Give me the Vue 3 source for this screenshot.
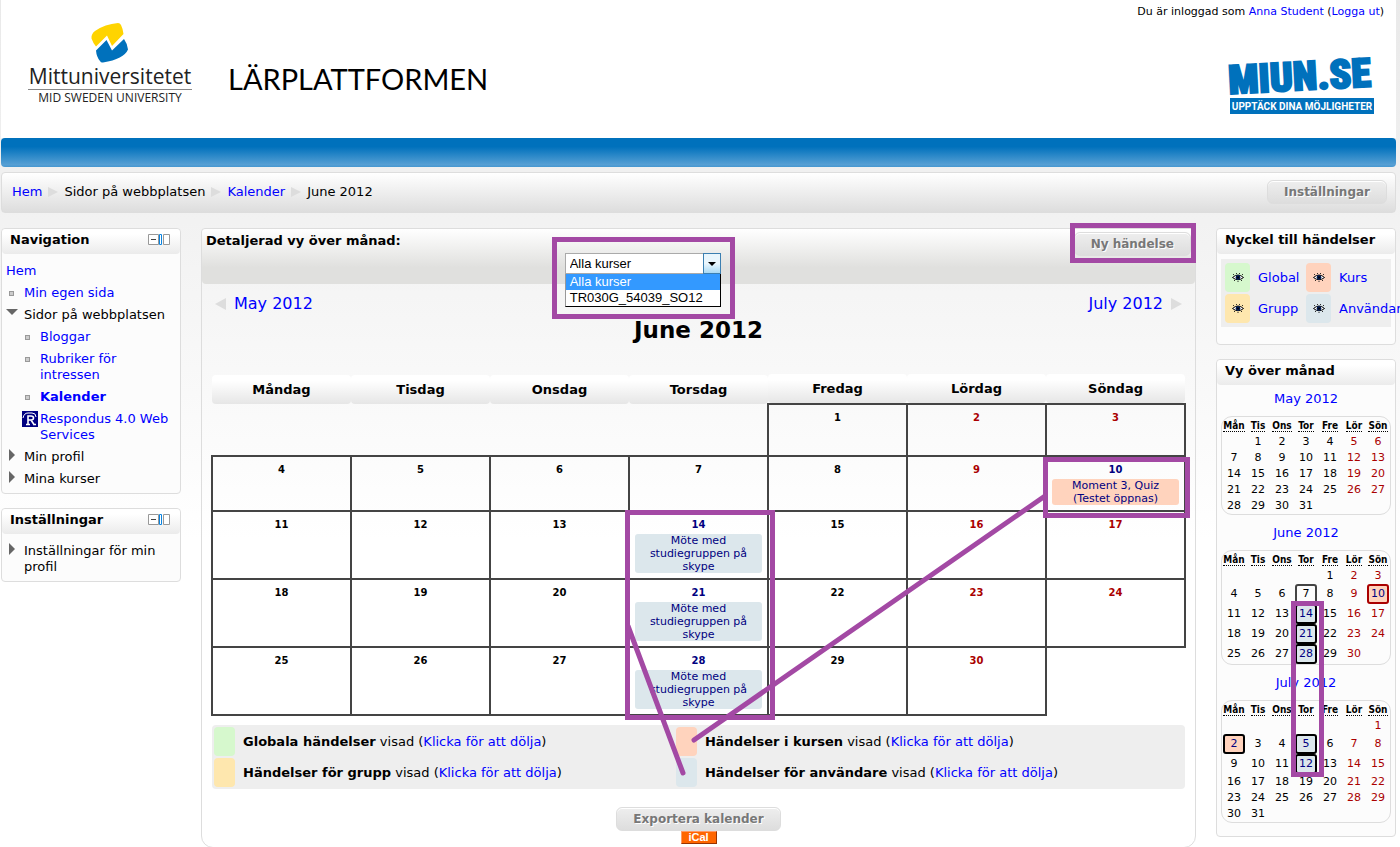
<script setup>
import { ref } from 'vue'

const course = ref('Alla kurser')
const courses = ['Alla kurser', 'TR030G_54039_SO12']
const weekdays = ['Måndag', 'Tisdag', 'Onsdag', 'Torsdag', 'Fredag', 'Lördag', 'Söndag']
const shortDays = ['Mån', 'Tis', 'Ons', 'Tor', 'Fre', 'Lör', 'Sön']

function buildWeeks(offset, total) {
  const cells = []
  for (let i = 0; i < offset; i++) cells.push(null)
  for (let d = 1; d <= total; d++) cells.push(d)
  while (cells.length % 7) cells.push(null)
  const weeks = []
  for (let i = 0; i < cells.length; i += 7) weeks.push(cells.slice(i, i + 7))
  return weeks
}

const juneWeeks = buildWeeks(4, 30)
const meeting = { kind: 'user', text: 'Möte med studiegruppen på skype' }
const events = {
  10: { kind: 'course', text: 'Moment 3, Quiz (Testet öppnas)' },
  14: meeting,
  21: meeting,
  28: meeting
}

const minis = [
  { title: 'May 2012', weeks: buildWeeks(1, 31), marks: {} },
  {
    title: 'June 2012',
    weeks: juneWeeks,
    marks: { 7: 'today', 10: 'course weekend-mark', 14: 'user', 21: 'user', 28: 'user' }
  },
  { title: 'July 2012', weeks: buildWeeks(6, 31), marks: { 2: 'course', 5: 'user', 12: 'user' } }
]

const legend = [
  { kind: 'global', label: 'Globala händelser' },
  { kind: 'course', label: 'Händelser i kursen' },
  { kind: 'group', label: 'Händelser för grupp' },
  { kind: 'user', label: 'Händelser för användare' }
]
const keys = [
  { kind: 'global', label: 'Global' },
  { kind: 'course', label: 'Kurs' },
  { kind: 'group', label: 'Grupp' },
  { kind: 'user', label: 'Användare' }
]
</script>

<template>
  <div class="page">
    <header class="top">
      <div class="brand">
        <svg class="emblem" viewBox="0 0 38 40" aria-hidden="true">
          <path d="M5 23.500Q2 20 .5 15.500Q0 11 4 8Q14 1 27 0Q29 0 30 2Q32 6 32.500 11L21 23L16 12.500Z" fill="#ffd400" />
          <path d="M5 27.500L15.500 17L21 27.500L33 16Q36 20 37 26.500Q33 36 12 39.500Q10 40 9 38Q5.500 34 5 27.500Z" fill="#0071bc" />
        </svg>
        <div class="uni">Mittuniversitetet</div>
        <div class="uni-sub">MID SWEDEN UNIVERSITY</div>
      </div>
      <div class="site-name">LÄRPLATTFORMEN</div>
      <div class="top-right">
        <div class="login">Du är inloggad som <a href="#">Anna Student</a> (<a href="#">Logga ut</a>)</div>
        <svg class="miun" viewBox="0 0 148 64" role="img" aria-label="MIUN.SE">
          <text class="miun-name" x="2" y="42" transform="rotate(-3 2 42)">MIUN.SE</text>
          <rect x="3" y="46" width="144" height="16" fill="#0071bc" />
          <text class="miun-tag" x="75" y="58" text-anchor="middle">UPPTÄCK DINA MÖJLIGHETER</text>
        </svg>
      </div>
    </header>

    <div class="blue-bar"></div>

    <nav class="crumbs">
      <a href="#">Hem</a><i class="tri"></i>
      <span>Sidor på webbplatsen</span><i class="tri"></i>
      <a href="#">Kalender</a><i class="tri"></i>
      <span>June 2012</span>
      <button class="btn settings" type="button">Inställningar</button>
    </nav>

    <div class="columns">
      <aside class="side">
        <section class="block">
          <h2 class="block-head">Navigation
            <svg class="tools" viewBox="0 0 22 12" aria-hidden="true">
              <path d="M.5 .5H10.500V10.500H.5ZM15.500 .5H21.500V10.500H15.500Z" fill="#fff" stroke="#999" />
              <path d="M3 5.500H8" stroke="#444" />
              <path d="M11.500 .5H13.500V10.500H11.500Z" fill="#fff" stroke="#0a84e0" />
            </svg>
          </h2>
          <ul class="tree">
            <li class="l0"><a href="#">Hem</a></li>
            <li class="l1 dot"><a href="#">Min egen sida</a></li>
            <li class="l1 open">Sidor på webbplatsen</li>
            <li class="l2 dot"><a href="#">Bloggar</a></li>
            <li class="l2 dot"><a href="#">Rubriker för intressen</a></li>
            <li class="l2 dot"><a href="#"><b>Kalender</b></a></li>
            <li class="l2">
              <svg class="resp" viewBox="0 0 16 16" aria-hidden="true">
                <rect width="16" height="16" fill="#000080" />
                <path d="M1 7Q2 2 6 2H10Q14 2 14 6" fill="none" stroke="#fff" />
                <path d="M6 14V5H9Q11.500 5 11.500 7Q11.500 9 9 9H6M9 9L12 13.500M4 13.500H8M11 13.500H14" fill="none" stroke="#fff" stroke-width="1.6" />
              </svg>
              <a href="#">Respondus 4.0 Web Services</a>
            </li>
            <li class="l1 shut">Min profil</li>
            <li class="l1 shut">Mina kurser</li>
          </ul>
        </section>
        <section class="block">
          <h2 class="block-head">Inställningar
            <svg class="tools" viewBox="0 0 22 12" aria-hidden="true">
              <path d="M.5 .5H10.500V10.500H.5ZM15.500 .5H21.500V10.500H15.500Z" fill="#fff" stroke="#999" />
              <path d="M3 5.500H8" stroke="#444" />
              <path d="M11.500 .5H13.500V10.500H11.500Z" fill="#fff" stroke="#0a84e0" />
            </svg>
          </h2>
          <ul class="tree">
            <li class="l1 shut">Inställningar för min profil</li>
          </ul>
        </section>
      </aside>

      <main class="main">
        <div class="main-head">
          <label class="main-title" for="course">Detaljerad vy över månad:</label>
          <div class="picker">
            <select id="course" v-model="course">
              <option v-for="c in courses" :key="c">{{ c }}</option>
            </select>
            <span class="drop"><i></i></span>
            <ul class="options">
              <li v-for="c in courses" :key="c" :class="{ chosen: c === course }">{{ c }}</li>
            </ul>
          </div>
          <button class="btn new-event" type="button">Ny händelse</button>
        </div>

        <div class="month-nav">
          <span><i class="tri left"></i><a href="#">May 2012</a></span>
          <span><a href="#">July 2012</a><i class="tri"></i></span>
        </div>
        <h1>June 2012</h1>

        <table class="month">
          <thead>
            <tr>
              <th v-for="d in weekdays" :key="d"><span>{{ d }}</span></th>
            </tr>
          </thead>
          <tbody>
            <tr v-for="(week, w) in juneWeeks" :key="w">
              <td v-for="(day, i) in week" :key="i" :class="{ blank: !day, weekend: i > 4 }">
                <template v-if="day">
                  <a v-if="events[day]" class="num linked" href="#">{{ day }}</a>
                  <span v-else class="num">{{ day }}</span>
                  <a v-if="events[day]" href="#" class="event" :class="events[day].kind">{{ events[day].text }}</a>
                </template>
              </td>
            </tr>
          </tbody>
        </table>

        <div class="legend">
          <template v-for="l in legend" :key="l.kind">
            <i class="swatch" :class="l.kind"></i>
            <span><b>{{ l.label }}</b> visad (<a href="#">Klicka för att dölja</a>)</span>
          </template>
        </div>

        <div class="export">
          <button class="btn" type="button">Exportera kalender</button>
          <a class="ical" href="#">iCal</a>
        </div>
      </main>

      <aside class="side">
        <section class="block key-block">
          <h2 class="block-head">Nyckel till händelser</h2>
          <div class="keys">
            <template v-for="k in keys" :key="k.kind">
              <i class="swatch" :class="k.kind">
                <svg viewBox="0 0 12 9" aria-hidden="true">
                  <path d="M.5 4.500Q6 -.5 11.500 4.500Q6 9 .5 4.500Z" fill="#fff" stroke="#000" />
                  <circle cx="6" cy="4.500" r="2.400" fill="#001a50" />
                  <circle cx="6" cy="4.500" r="1" fill="#000" />
                  <path d="M2 2L1 1M4.500 1V0M7.500 1V0M10 2L11 1M3 7L2 8M9 7L10 8M6 8V9" stroke="#000" stroke-width=".8" />
                </svg>
              </i>
              <a href="#">{{ k.label }}</a>
            </template>
          </div>
        </section>

        <section class="block mini-block">
          <h2 class="block-head">Vy över månad</h2>
          <div v-for="m in minis" :key="m.title" class="mini">
            <a class="mini-title" href="#">{{ m.title }}</a>
            <div class="mini-box">
              <table>
                <thead>
                  <tr>
                    <th v-for="d in shortDays" :key="d"><abbr>{{ d }}</abbr></th>
                  </tr>
                </thead>
                <tbody>
                  <tr v-for="(week, w) in m.weeks" :key="w">
                    <td v-for="(day, i) in week" :key="i" :class="{ weekend: i > 4 }">
                      <a v-if="m.marks[day]" href="#" class="mark" :class="m.marks[day]">{{ day }}</a>
                      <template v-else>{{ day }}</template>
                    </td>
                  </tr>
                </tbody>
              </table>
            </div>
          </div>
        </section>
      </aside>
    </div>

    <svg class="notes" width="1400" height="847" aria-hidden="true">
      <g fill="none" stroke="#a349a4" stroke-width="5">
        <path d="M554.500 239.500H732.500V316.500H554.500Z" />
        <path d="M1072.500 225.500H1193.500V260.500H1072.500Z" />
        <path d="M1045.500 459.500H1187.500V515.500H1045.500Z" />
        <path d="M627.500 512.500H772.500V717.500H627.500Z" />
        <path d="M1293.500 603.500H1321.500V774.500H1293.500Z" />
        <path d="M694 740L1045 496M628 626L683 773" stroke-linecap="round" />
      </g>
    </svg>
  </div>
</template>

<style>
body {
  margin: 0;
  background: #fff;
}
</style>

<style scoped>
.page {
  position: relative;
  min-height: 100vh;
  max-height: 100vh;
  overflow: hidden;
  box-sizing: border-box;
  padding: 0 4px 0 1px;
  background: linear-gradient(#e9e9e9, #fff 540px);
  font: 13px/16px "DejaVu Sans", Verdana, sans-serif;
  color: #000;
}
a { color: #00f; text-decoration: none; }
ul { list-style: none; margin: 0; padding: 0; }

.top {
  display: flex;
  height: 138px;
  background: #fff;
}
.brand {
  width: 164px;
  margin-left: 27px;
  padding-top: 23px;
  text-align: center;
  color: #222;
}
.emblem { display: block; width: 38px; height: 40px; margin: 0 auto; }
.uni {
  font: 21px/26px "Open Sans", sans-serif;
  border-bottom: 1px solid #888;
}
.uni-sub { font: 12px/16px "Open Sans", sans-serif; white-space: nowrap; }
.site-name {
  margin: 59px 0 0 36px;
  font: 29px/40px Lato, sans-serif;
}
.top-right {
  margin-left: auto;
  padding: 5px 12px 0 0;
  display: flex;
  flex-direction: column;
  align-items: flex-end;
}
.login { font-size: 11px; line-height: 14px; }
.miun { width: 148px; height: 64px; margin: 33px 9px 0 0; overflow: visible; }
.miun-name {
  font: 900 40px "Roboto Condensed", "Open Sans Condensed", Roboto, sans-serif;
  fill: #0071bc;
  stroke: #0071bc;
  stroke-width: 2px;
}
.miun-tag {
  font: bold 10px Roboto, sans-serif;
  fill: #fff;
}

.blue-bar {
  height: 29px;
  border-radius: 4px;
  background: linear-gradient(#0071bc 30%, #569fd4 92%, #4597d0);
}
.crumbs {
  display: flex;
  align-items: center;
  height: 37px;
  margin-top: 5px;
  padding: 0 8px 2px 10px;
  border: 1px solid #ddd;
  border-radius: 4px;
  background: linear-gradient(#fff, #ddd);
}
.tri {
  width: 0;
  height: 0;
  margin: 0 6px;
  border: solid transparent;
  border-width: 5px 0 5px 10px;
  border-left-color: #ddd;
}
.btn {
  box-sizing: border-box;
  height: 24px;
  padding: 0 16px;
  border: 1px solid #ddd;
  border-radius: 6px;
  background: linear-gradient(#eee, #ddd);
  box-shadow: inset 0 1px 0 #fff;
  font: bold 12px/20px "DejaVu Sans", Verdana, sans-serif;
  color: #777;
  text-shadow: 1px 1px 0 #fff;
}
.settings { margin-left: auto; }

.columns {
  display: grid;
  grid-template-columns: 180px minmax(0, 1fr) 180px;
  gap: 20px;
  align-items: start;
  margin-top: 15px;
}
.block {
  border: 1px solid #ddd;
  border-radius: 4px;
  background: #fcfcfc;
  margin-bottom: 14px;
}
.block-head {
  display: flex;
  align-items: center;
  justify-content: space-between;
  height: 25px;
  margin: 0;
  padding: 0 10px 4px 8px;
  box-sizing: border-box;
  border-radius: 4px;
  background: linear-gradient(#fff 20%, #ebebeb);
  font-size: 13px;
  line-height: 16px;
}
.tools { width: 22px; height: 12px; }
.tree { padding: 6px 4px 3px; }
.tree li {
  position: relative;
  padding-top: 3px;
  padding-bottom: 3px;
}
.l1 { padding-left: 18px; }
.l2 { padding-left: 34px; }
.dot::before {
  content: "";
  position: absolute;
  left: 3px;
  top: 9px;
  width: 3px;
  height: 3px;
  border: 1px solid #999;
  background: #ccc;
}
.l2.dot::before { left: 19px; }
.open::before {
  content: "";
  position: absolute;
  left: 0;
  top: 5px;
  border: solid transparent;
  border-width: 6px 6px 0;
  border-top-color: #666;
}
.shut::before {
  content: "";
  position: absolute;
  left: 3px;
  top: 3px;
  border: solid transparent;
  border-width: 6px 0 6px 6px;
  border-left-color: #666;
}
.resp { position: absolute; left: 16px; top: 3px; width: 16px; height: 16px; }

.main {
  border: 1px solid #ddd;
  border-radius: 4px 4px 12px 12px;
  padding-bottom: 3px;
}
.main-head {
  position: relative;
  height: 55px;
  border-radius: 4px;
  background: linear-gradient(#fff, #e0e0de 70%);
  display: grid;
  grid-template-columns: 13fr 156px 17fr;
  align-items: start;
}
.main-title { padding: 4px 0 0 4px; font-weight: bold; }
.new-event { justify-self: end; margin: 3px 4px 0 0; }
.picker {
  position: relative;
  margin-top: 24px;
  font: 13px/16px "Liberation Sans", Arial, sans-serif;
}
.picker select {
  display: block;
  width: 100%;
  height: 21px;
  padding: 0 4px;
  border: 1px solid #aaa;
  border-radius: 0;
  appearance: none;
  background: #fff;
  font: inherit;
  color: #000;
}
.drop {
  position: absolute;
  right: 0;
  top: 0;
  width: 16px;
  height: 19px;
  border: 1px solid #3c7fb1;
  background: linear-gradient(#eaf6fd 50%, #a7d9f5);
  display: flex;
  align-items: center;
  justify-content: center;
}
.drop i { border: 4px solid transparent; border-top-color: #000; border-bottom: 0; }
.options {
  position: absolute;
  z-index: 1;
  left: 0;
  right: 0;
  top: 21px;
  border: 1px solid #000;
  border-left-color: #999;
  border-top: 0;
  background: #fff;
}
.options li { padding: 0 4px; white-space: nowrap; }
.options .chosen { background: #3399ff; color: #fff; }

.month-nav {
  display: flex;
  justify-content: space-between;
  margin: 10px 13px 0;
  font-size: 16px;
  line-height: 20px;
}
.month-nav span { display: flex; align-items: center; }
.month-nav .tri { margin: 0 0 0 8px; border-width: 6px 0 6px 11px; }
.month-nav .tri.left { margin: 0 8px 0 0; border-width: 6px 11px 6px 0; border-right-color: #ddd; }
h1 { margin: 0 0 28px; text-align: center; font-size: 23px; line-height: 32px; }

.month {
  width: calc(100% - 18px);
  margin: 0 9px;
  table-layout: fixed;
  border-collapse: collapse;
  text-align: center;
}
.month th { padding: 0; }
.month th span {
  display: block;
  line-height: 29px;
  border-radius: 4px;
  background: linear-gradient(#fff 20%, #e6e6e6);
}
.month td {
  height: 52px;
  padding: 5px;
  vertical-align: top;
  border: 2px solid #444;
  font-size: 11px;
  line-height: 13px;
  box-sizing: border-box;
}
.month td.blank { border: 0; }
.num { display: block; margin-bottom: 2px; font-weight: bold; font-size: 10px; line-height: 15px; }
.weekend { color: #a00; }
.linked { color: #000080; }
.event { display: block; padding: 0 12px; border-radius: 3px; color: #000080; }

.global { background: #d6f8cd; }
.course { background: #ffd3bd; }
.group { background: #fee7ae; }
.user { background: #dce7ec; }

.legend {
  display: grid;
  grid-template-columns: 21px 8fr 21px 9fr;
  gap: 2px 8px;
  align-items: center;
  margin: 9px 10px 0;
  padding: 2px;
  border-radius: 4px;
  background: #eee;
}
.swatch { height: 29px; border-radius: 4px; }
.export {
  display: flex;
  flex-direction: column;
  align-items: center;
  margin-top: 18px;
}
.ical {
  width: 34px;
  border: 1px solid #f96;
  border-right-color: #930;
  border-bottom-color: #930;
  background: #f60;
  color: #fff;
  text-align: center;
  font: bold 11px/11px "Liberation Sans", Arial, sans-serif;
}

.keys {
  display: grid;
  grid-template-columns: 25px 40px 25px minmax(0, 1fr);
  column-gap: 8px;
  row-gap: 2px;
  align-items: center;
  margin: 5px 4px 17px;
  padding: 4px;
  background: #eee;
}
.keys .swatch { display: flex; align-items: center; justify-content: center; }
.keys svg { width: 12px; height: 9px; }

.mini-block { padding-bottom: 13px; }
.mini-title { display: block; text-align: center; line-height: 16px; padding: 6px 0 9px; }
.mini + .mini .mini-title { padding-top: 10px; }
.mini-box {
  margin: 0 4px;
  border: 1px solid #ddd;
  border-radius: 11px;
}
.mini table {
  width: 100%;
  table-layout: fixed;
  border-collapse: collapse;
  text-align: center;
  font-size: 11px;
  line-height: 16px;
}
.mini th, .mini td { padding: 0; }
.mini th { font: bold 10px/11px "DejaVu Sans Condensed", "DejaVu Sans", sans-serif; height: 17px; }
.mini abbr { border-bottom: 1px dotted #000; }
.mark {
  display: block;
  width: 18px;
  margin: 0 auto;
  border: 2px solid #000;
  border-radius: 3px;
  color: #000080;
}
.today { border-color: #444; color: #000; }
.weekend-mark { border-color: #a00; }

.notes { position: absolute; left: 0; top: 0; z-index: 2; pointer-events: none; }
</style>
